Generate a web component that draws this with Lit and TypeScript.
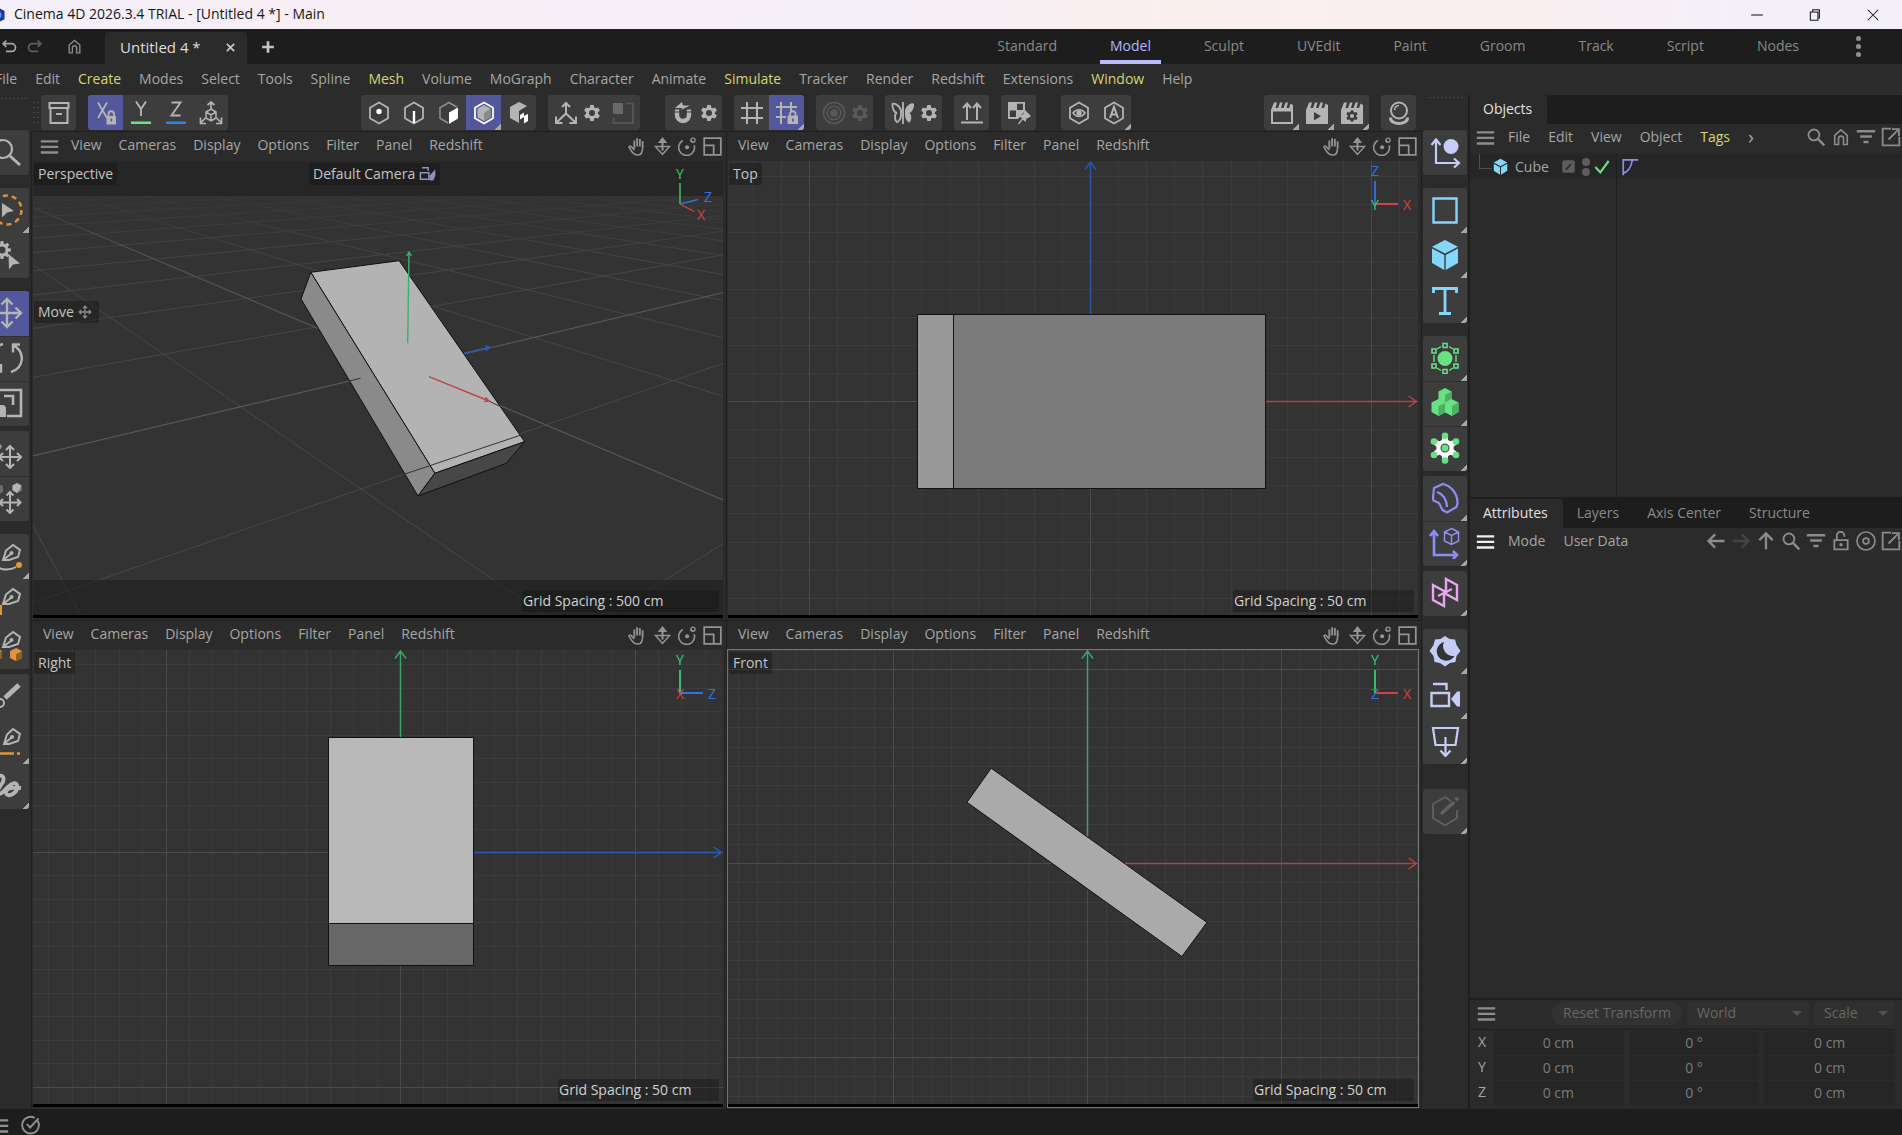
import { LitElement, html, svg, css, nothing, TemplateResult, SVGTemplateResult } from "lit";
import { customElement, property } from "lit/decorators.js";
import { classMap } from "lit/directives/class-map.js";

/* ---------- icons, 24 unit box ---------- */

const gearPath = (cx: number, cy: number, r: number, teeth: number, hole: number): string => {
  const pts: string[] = [];
  const step = (Math.PI * 2) / teeth;
  for (let i = 0; i < teeth; i++) {
    const a = i * step - Math.PI / 2;
    const seg: Array<[number, number]> = [[-0.36, 0.72], [-0.2, 1], [0.2, 1], [0.36, 0.72]];
    for (const [o, k] of seg) {
      pts.push(`${(cx + Math.cos(a + o * step) * r * k).toFixed(2)} ${(cy + Math.sin(a + o * step) * r * k).toFixed(2)}`);
    }
  }
  const h = hole;
  return `M${pts.join("L")}ZM${cx - h} ${cy}a${h} ${h} 0 1 0 ${2 * h} 0a${h} ${h} 0 1 0 ${-2 * h} 0Z`;
};

const HEX = "M12 1.5L21 6.7V17.3L12 22.5L3 17.3V6.7Z";
const FOURWAY = "M12 2V22M2 12H22M8.5 5.5L12 2L15.500 5.5M8.5 18.5L12 22L15.5 18.5M5.5 8.5L2 12L5.5 15.5M18.5 8.5L22 12L18.5 15.5";
const line = (d: string, w = 2, c = "currentColor") =>
  svg`<path d=${d} fill="none" stroke=${c} stroke-width=${w} />`;
const fill = (d: string, c = "currentColor") => svg`<path d=${d} fill=${c} fill-rule="evenodd" />`;

const ICONS: Record<string, SVGTemplateResult> = {
  undo: svg`${line("M3 8H15A5 5 0 0 1 15 19H7M7.500 3.5L3 8L7.5 12.5", 2.4)}`,
  redo: svg`${line("M21 8H9A5 5 0 0 0 9 19H17M16.500 3.5L21 8L16.5 12.5", 2.4)}`,
  home: svg`${line("M4.5 21V10L12 3.500L19.5 10V21H15V14A3 3 0 0 0 9 14V21Z")}`,
  close: svg`${line("M4 4L20 20M20 4L4 20", 4)}`,
  plus: svg`${line("M12 2V22M2 12H22", 4.6)}`,
  menu: svg`${line("M1 5.500H23M1 12.500H23M1 19.500H23", 3)}`,
  search: svg`<circle cx="9.5" cy="9.5" r="6.5" fill="none" stroke="currentColor" stroke-width="2.200" />${line("M14 14L22 22", 2.8)}`,
  filter: svg`${line("M1 5H23M5 11.5H19M9 18H15", 3)}`,
  popout: svg`${line("M12 2H2V22H22V12M9 15L20 4M13 2.500H21.5V11", 2.2)}`,
  back: svg`${line("M22 12H4M11 4L3 12L11 20", 2.8)}`,
  forward: svg`${line("M2 12H20M13 4L21 12L13 20", 2.8)}`,
  up: svg`${line("M12 22V4M4 11L12 3L20 11", 2.8)}`,
  lock: svg`${line("M4 11H20V22H4ZM7 11V6A4.500 4.5 0 0 1 16 5V7", 2.200)}<circle cx="12" cy="16.5" r="2" fill="currentColor" />`,
  target: svg`<circle cx="12" cy="12" r="10.8" fill="none" stroke="currentColor" stroke-width="2" /><circle cx="12" cy="12" r="3.5" fill="none" stroke="currentColor" stroke-width="2" />`,
  checkCircle: svg`${line("M20 7A10 10 0 1 1 16.500 3.5M7 11L11 15L21 4", 2.3)}`,
  hand: svg`${line("M8 14.500V4.500M11.500 12V1.500M15 12V2.500M18.500 13V5.500", 2.3)}${line("M8 16.500L4 12C2.500 10.500 0.500 12 2 14C6 21 8 22.800 13 22.800C17.500 22.800 18.500 19 18.500 12", 2)}`,
  dolly: svg`${fill("M12 0L18 7.500H13.300V11H23L12 23.500L1 11H10.700V7.500H6ZM5 13L12 20.500L19 13H13.300V17H10.700V13Z")}`,
  orbit: svg`${line("M6 4.500A10 10 0 1 0 20.500 10.500", 2)}${line("M15.500 4.500A10 10 0 0 1 19 7", 2)}<circle cx="11.500" cy="13" r="2.600" fill="currentColor" /><circle cx="19" cy="4" r="2.600" fill="none" stroke="currentColor" stroke-width="1.600" />`,
  maximize: svg`${line("M1.500 1.500H22.500V22.500H1.5ZM1.500 10.500H13.500V22.500", 2.2)}`,
  archive: svg`${line("M2.500 2H21.500V7H2.5ZM3.500 7V22H20.500V7M9 13H15", 2)}`,
  axisX: svg`${line("M4 1.500L13 17M13 1.500L4 17", 1.8)}${fill("M12.500 15H22V23.500H12.500Z")}${line("M14.500 15V13A2.700 2.700 0 0 1 20 13V15", 1.8)}<rect x="16.500" y="17.500" width="1.600" height="3" fill="#53579c" />`,
  axisY: svg`${line("M7 0.500L12 8L17 0.500M12 8V15", 1.9)}<rect x="2" y="20.500" width="20" height="2.500" fill="#6be48c" />`,
  axisZ: svg`${line("M7.500 1.500H16.500L7.500 14.500H16.500", 1.9)}<rect x="2" y="20.500" width="20" height="2.500" fill="#2a86e8" />`,
  coords: svg`${line("M12 1V9M8.500 4L12 1L15.500 4M6.500 17L1.500 22M1.500 16.500V22.500H7M17.500 17L22.500 22M22.500 16.500V22.500H17", 1.7)}${line("M12 8L17 11V17L12 20L7 17V11ZM7 11L12 14L17 11M12 14V20", 1.5)}`,
  points: svg`${line(HEX, 1.8)}<circle cx="12" cy="10.500" r="2.700" fill="#fff" />`,
  edges: svg`${line(HEX, 1.8)}${line("M12 10V22", 2.4, "#fff")}`,
  polys: svg`${line("M11 22L3 17.300V6.700L12 1.500L20 6.200", 1.6, "#8d8d8d")}${fill("M12 11.500L21 6.500V17.500L12 23Z", "#fff")}`,
  model: svg`${fill("M12 4L18.500 7.800V16.200L12 20L5.500 16.200V7.800Z")}${fill("M12 12L18.500 7.800V16.200L12 20Z", "#8a8a8a")}${line(HEX, 1.8, "#fff")}`,
  texture: svg`${fill("M12 1L20 5L12 10V22L3 17V6Z")}${fill("M13 14L17 11.500V16L13 18.500ZM17 15L21 12.800V20L17 22.500Z", "#fff")}`,
  axisMode: svg`${line("M12 2V12.500L2.500 21.500M12 12.500L21.500 21.500M8 6L12 2L16 6M2 15.500V22H8.500M22 15.500V22H15.500", 2)}`,
  gear: svg`${fill(gearPath(12, 12, 11, 6, 4))}`,
  solo: svg`${fill("M2 2H12V13H2Z", "#686868")}${line("M15 2.500H22V22H2.500V16.500", 2, "#545454")}`,
  magnet: svg`${line("M6 8.500V14A6 6 0 0 0 18 14V8.500", 4.4)}${line("M3 11H9.500M14.500 11H21", 1.2, "#3d3d3d")}${fill("M11 1L4 7H11.500L10 9L19 4.500H12Z")}`,
  grid: svg`${line("M7 1V23M17 1V23M1 7H23M1 17H23", 2)}`,
  gridLock: svg`${line("M6 1V23M16 1V10M1 6H22M1 16H11", 2)}${fill("M12.500 14.500H23V23H12.500Z")}${line("M15 15V12.500A2.800 2.800 0 0 1 20.500 12.500V15", 1.8)}<rect x="17" y="17.500" width="1.600" height="3" fill="#53579c" />`,
  rings: svg`<circle cx="12" cy="12" r="10.500" fill="none" stroke="currentColor" stroke-width="1.600" /><circle cx="12" cy="12" r="6.800" fill="none" stroke="currentColor" stroke-width="1.600" /><circle cx="12" cy="12" r="3.800" fill="currentColor" />`,
  butterfly: svg`${line("M10 9C8 3 2 2 1.500 3C1 6 3 12 6 12C3 13 3.500 19 6 21C8 21 10 17 10 14Z", 1.8)}${line("M12 1V23", 1.8)}${fill("M14 9C16 3 22 1 23 3C23.500 6 21 12 18 12C21 13 21 19 18.500 21.500C16 21 14 17 14 14Z")}`,
  arrowsUp: svg`${line("M7 3V19M17 3V19M3 7L7 2.500L11 7M13 7L17 2.500L21 7M1 21.500H23", 2)}`,
  pinGrid: svg`${fill("M1 1H18V10L11 18H1ZM10 2.800V9H16V2.800ZM2.800 9.500V16H9V9.500Z")}${fill("M18 9L24 15L22 16.500L19.500 17.500L18.500 21L15.800 18.500L12 23.500L11 22.500L15 17.500L12.500 15L16 13.500Z")}`,
  eyeHex: svg`${line(HEX, 1.8)}${line("M6 12C9 7.500 15 7.500 18 12C15 16.500 9 16.500 6 12Z", 1.5)}<circle cx="12" cy="12" r="2.700" fill="currentColor" />`,
  autoHex: svg`${line(HEX, 1.8)}${line("M8 17L12 6L16 17M9.500 13.500H14.500", 2)}`,
  clap: svg`${line("M2 9.500H22V22H2Z", 2)}${fill("M1 9L4 1.500H7L5.500 7H8L10 1.500H12.500L11 7H13.500L15.500 1.500H18L16.500 7H19L20.500 2.500L23 4V10H1Z")}`,
  clapPlay: svg`${fill("M1 9L4 1.500H7L5.500 7H8L10 1.500H12.500L11 7H13.500L15.500 1.500H18L16.500 7H19L20.500 2.500L23 4V23H1ZM9 11V19.500L16 15.200Z")}`,
  clapGear: svg`${fill("M1 9L4 1.500H7L5.500 7H8L10 1.500H12.500L11 7H13.500L15.500 1.500H18L16.500 7H19L20.500 2.500L23 4V23H1Z")}${fill(gearPath(12, 15, 6, 6, 2), "#3d3d3d")}`,
  ball: svg`<circle cx="12" cy="9.500" r="8" fill="none" stroke="currentColor" stroke-width="2" />${line("M7.500 9A5 5 0 0 1 12 4.500", 1.6)}${line("M3.500 16.500C3 24.500 21 24.500 20.500 16.500", 3)}`,

  /* ---------- palette icons, 32 unit box ---------- */
  pSearch: svg`<circle cx="12" cy="13" r="9" fill="none" stroke="currentColor" stroke-width="2.200" />${line("M19 20L29 29", 3)}`,
  pSelect: svg`<circle cx="16" cy="16" r="14.500" fill="none" stroke="#e0953c" stroke-width="2.400" stroke-dasharray="5 4.100" />${fill("M11 9L23 17L16 18.500L11 23.500Z")}`,
  pTweak: svg`${fill(gearPath(11, 11, 9, 8, 3.500))}${fill("M17.500 15L29 24.500L22 25.500L18 30.500Z")}`,
  pMove: svg`${line("M16 2V30M2 16H30M10.500 7.500L16 2L21.500 7.500M10.500 24.500L16 30L21.500 24.500M7.500 10.500L2 16L7.500 21.500M24.500 10.500L30 16L24.500 21.500", 2.4)}`,
  pRotate: svg`${line("M21 3A14 14 0 0 1 20 30M11 29A14 14 0 0 1 12 2M29 2.500H22V10.500M3 29.500H10V22", 2.4)}`,
  pScale: svg`${line("M3 14V3H30V29H16M13 9H22V18", 2.6)}${fill("M3 18H11Q15 18 15 22V30H3Z")}`,
  pMoveAxis: svg`${line("M19 9V31M8 20H30M15 13L19 9L23 13M15 27L19 31L23 27M12 16L8 20L12 24M26 16L30 20L26 24", 2)}${fill("M1 5H7L11 9L10 12L4 11Z", "#909090")}`,
  pMoveCube: svg`${line("M19 10V31M8.500 20.500H29.500M15.500 13.500L19 10L22.500 13.500M15.500 27.500L19 31L22.500 27.500M12 17L8.500 20.500L12 24M26 17L29.500 20.500L26 24", 2)}${fill("M26 1L30.500 3.500V8.500L26 11L21.500 8.500V3.500Z", "#8a8a8a")}${fill("M26 1L30.500 3.500L26 11L21.500 8V3.500Z")}${fill("M8 2L12 4V10L6 13L2 10V4Z", "#6c6c6c")}`,
  pPenArc: svg`${line("M12 20L15 10.500L22 5L29 10L27 17L18 20ZM12 20L20.500 13.500M22 5L29 10", 2)}<circle cx="20.500" cy="13" r="2" fill="currentColor" />${line("M5 25.500C10 31 20 30 25 27", 2)}<circle cx="28" cy="25" r="3" fill="#e0953c" />`,
  pPenSquare: svg`${line("M12 19L15 9.500L22 4L29 9L27 16L18 19ZM12 19L20.500 12.500", 2)}<circle cx="20.500" cy="12" r="2" fill="currentColor" /><rect x="2" y="20" width="9" height="10" fill="#e0953c" />`,
  pPenCubes: svg`${line("M12 17L15 7.500L22 2L29 7L27 14L18 17ZM12 17L20.500 10.500", 2)}<circle cx="20.500" cy="10" r="2" fill="currentColor" />${fill("M25 18L31 21V28L25 31L19 28V21ZM5 18L11 21V28L5 31L0 28V21ZM5 6L9 8V15L5 17Z", "#e0953c")}${fill("M25 24L31 21V28L25 31ZM5 24L11 21V28L5 31Z", "#935f22")}`,
  pBrush: svg`${line("M14 18L28 5", 5)}<circle cx="9" cy="23" r="4" fill="none" stroke="currentColor" stroke-width="2" />`,
  pPenLine: svg`${line("M13 19L16 9.500L22 4L29 9L27 16L18 19ZM13 19L20.500 12.500", 2)}<circle cx="21" cy="12" r="2" fill="currentColor" />${line("M4 28.500H23M26 28.500H29", 2.4, "#e0953c")}`,
  pSquiggle: svg`${line("M5 8C12 2 15 9 10 15C5 22 6 27 12 22C17 16 24 10 26 15C28 22 17 29 15 23C14 18 22 17 30 18", 3.800)}`,

  rAxis: svg`${line("M7 4V27H30M2.500 9L7 3.500L11.500 9M25 22.500L30 27L25 31.500", 2.2)}<circle cx="22" cy="10.500" r="7.500" fill="currentColor" />`,
  rRect: svg`${line("M4.500 4.500H27.500V28.500H4.500Z", 2.4)}`,
  rCube: svg`${fill("M16 1L29 7.800L16 14.500L3 7.800Z")}${fill("M3 9.500L15.300 16V31L3 24ZM29 9.500L16.700 16V31L29 24Z")}`,
  rText: svg`${line("M4.500 9V4.500H27.500V9M16 4.500V29M10 29.500H22", 2.8)}`,
  rSubdiv: svg`<circle cx="16" cy="16.500" r="7.500" fill="currentColor" />${line("M14 1.500H18V5.500H14ZM14 27.500H18V31.500H14ZM3 7H7V11H3ZM25 7H29V11H25ZM3 22H7V26H3ZM25 22H29V26H25Z", 1.6)}${line("M5 13V20M27 13V20M8 7L12 4.500M20 4.500L24 7M8 26L12 28.500M20 28.500L24 26", 1.4)}`,
  rCloner: svg`${fill("M16 1L22.500 4.500V12L29.500 15.500V25L23 29L16 25.500L9.500 29L2.500 25V15.500L9.500 12V4.500Z")}${fill("M16 8L22.500 4.500V12L16 15.500ZM23 19L29.500 15.500V25L23 29ZM9.500 19L16 16V25.500L9.500 29Z", "#4fae66")}`,
  rDynamics: svg`${fill(gearPath(16, 16, 12, 6, 4.500), "#fff")}<g fill="currentColor"><circle cx="16" cy="16" r="3.500" /><circle cx="16" cy="3.800" r="3.300" /><circle cx="16" cy="28.500" r="3.300" /><circle cx="5" cy="9.500" r="3.300" /><circle cx="27" cy="9.500" r="3.300" /><circle cx="5" cy="23" r="3.300" /><circle cx="27" cy="23" r="3.300" /></g>`,
  rBend: svg`${line("M14 2C22 4 28.500 11 28.500 21L27.500 25L18 30.500L13.500 28L10 21L4.500 18.500L4 16L5 6ZM8 10C14 12 18 18 18 25", 2.2)}`,
  rAxisCube: svg`${line("M5 4V28H28M1 9L5 4L9 9M24 24L28 28L24 32", 2.6)}${line("M22.500 1.500L29.500 5V14L22.500 17.500L15.500 14V5ZM15.500 5L22.500 8.500L29.500 5M22.500 8.500V17.500", 1.5)}`,
  rField: svg`${line("M4 8L15 14V29L4 23ZM17 2L28 8V23L17 17Z", 2.4)}${line("M9 19L23 12", 2)}`,
  rLight: svg`${fill("M16 1L20.500 4L26 4.500L27.500 10L31.500 16L27.500 21L26.500 27L21 28L16 31.500L11 28L5.500 27L4.500 21L0.500 16L4.500 10L6 4.500L11.500 4Z")}${fill("M15 7A9.500 9.500 0 1 0 25.500 21A10 10 0 0 1 15 7Z", "#343434")}`,
  rCamera: svg`${line("M2.500 13H20V26H2.500ZM4 4H17.500V10", 2.4)}${fill("M22 19L28 11.500H31V26.500H28Z")}`,
  rStage: svg`${line("M4 3H29L26.500 20H6.500ZM16.500 12V29.500M11.500 25.500L16.500 31L21.500 25.500", 2.2)}`,
  rEdit: svg`${line("M22 6L16 2L4 9V23L16 30.500L28 23V15", 1.8)}${line("M12 19L25 7", 3.6)}${line("M26.500 5L29 3", 3.6)}`,

  logo: svg`${fill("M12 1L22 6.500V17.500L12 23L2 17.500V6.500Z", "#2230a0")}<circle cx="12" cy="12" r="6" fill="#5d9cf5" />`,
  cube: svg`${fill("M12 1L21.500 6.500L12 11.500L2.500 6.500ZM2.500 8L11.300 13V23.500L2.500 18ZM21.500 8L12.700 13V23.500L21.500 18Z")}`,
  layerBox: svg`<rect x="2" y="2" width="20" height="20" rx="3" fill="#5d5d5d" />${line("M8 17L16 8", 3, "#2b2b2b")}`,
  check: svg`${line("M2 12L9.500 20L22 3", 3.2)}`,
  phong: svg`${line("M3 23V2.500H23M3 20C8 19 14 13 15 3", 2.2)}`,
  camLink: svg`${line("M2 11H14V20H2ZM4 4H13V8", 2.2)}${fill("M15 15L23 6V15L20 22L15 22Z")}`,
  fourway: svg`${line(FOURWAY, 2.2)}`,
  minimize: svg`${line("M2 12H22", 1.8)}`,
  restore: svg`${line("M4 7H17V21H4ZM8 6V3H19.500V17H18", 1.8)}`,
  winClose: svg`${line("M3 3L21 21M21 3L3 21", 1.8)}`,
};

const icon = (name: string, size = 24, box = 24): TemplateResult =>
  html`<svg class="icon" width=${size} height=${size} viewBox="0 0 ${box} ${box}" aria-hidden="true">${ICONS[name]}</svg>`;

const shared = css`
  * { box-sizing: border-box; }
  button, input, select { font: inherit; color: inherit; }
  button { border: 0; padding: 0; margin: 0; background: none; display: flex; align-items: center; justify-content: center; }
  .icon { display: block; flex: none; }
`;

/* ---------- viewport scenes, 690 x 454 ---------- */

interface GridSpec { x: number; y: number; step: number; }

const orthoGrid = ({ x, y, step }: GridSpec): SVGTemplateResult => {
  const minor: string[] = [];
  const major: string[] = [];
  for (let i = -30; i <= 30; i++) {
    const gx = Math.round(x + i * step) + 0.5;
    const gy = Math.round(y + i * step) + 0.5;
    const set = i % 10 === 0 ? major : minor;
    if (gx > 0 && gx < 690) set.push(`M${gx} 0V454`);
    if (gy > 0 && gy < 454) set.push(`M0 ${gy}H690`);
  }
  return svg`<rect width="690" height="454" fill="#333" />
    <path d=${minor.join("")} stroke="#3b3b3b" /><path d=${major.join("")} stroke="#4b4b4b" />`;
};

/** Ground plane seen through the default camera. */
const ground = (): SVGTemplateResult => {
  const at = (i: number, j: number) => {
    const w = 1 - 0.187 * i + 0.15 * j;
    return `${((849 + 90.500 * i + 448 * j) / w / 2.24 - 3).toFixed(1)} ${((650.8 + 19.700 * i - 4 * j) / w / 3 - 11).toFixed(1)}`;
  };
  const minor: string[] = [];
  const major: string[] = [];
  for (let i = -20; i <= 4; i++) {
    const near = Math.max(-5, (0.187 * i - 1 + 0.12) / 0.15);
    (i === 0 ? major : minor).push(`M${at(i, near)}L${at(i, 20)}`);
  }
  for (let j = -5; j <= 20; j++) {
    const near = Math.min(4.600, (1 + 0.15 * j - 0.12) / 0.187);
    (j === 0 ? major : minor).push(`M${at(near, j)}L${at(-20, j)}`);
  }
  return svg`<g mask="url(#fade)" fill="none"><path d=${minor.join("")} stroke="#484848" /><path d=${major.join("")} stroke="#585858" stroke-width="1.200" /></g>`;
};

const RED = "#d44343";
const GREEN = "#35d06f";
const BLUE = "#2f74de";

const letter = (t: string, x: number, y: number, c: string) =>
  svg`<text x=${x} y=${y + 5} fill=${c} text-anchor="middle" font-size="14">${t}</text>`;

const gizmo = (up: string, right: string, origin: string): SVGTemplateResult => {
  const col: Record<string, string> = { X: RED, Y: GREEN, Z: BLUE };
  return svg`<path d="M647 20V43" stroke=${col[up]} stroke-width="1.800" /><path d="M647 43H670" stroke=${col[right]} stroke-width="2" />
    ${letter(up, 647, 10, col[up])}${letter(right, 679, 44, col[right])}${letter(origin, 647, 44, col[origin])}`;
};

const SCENES: Record<string, () => SVGTemplateResult> = {
  Perspective: () => svg`
    <defs><linearGradient id="fg" x1="0" y1="0" x2="0" y2="1"><stop offset="0.060" stop-color="#222" /><stop offset="0.220" stop-color="#ddd" /><stop offset="0.500" stop-color="#fff" /></linearGradient>
    <mask id="fade" maskUnits="userSpaceOnUse" x="0" y="0" width="690" height="454"><rect width="690" height="454" fill="url(#fg)" /></mask></defs>
    <rect width="690" height="454" fill="#333" />
    ${ground()}
    <rect width="690" height="35" fill="#262626" /><rect y="419" width="690" height="35" fill="#1c1c1c" opacity="0.550" />
    <g stroke="#111" stroke-linejoin="round">
      <path d="M277.800 111.300L366.200 99.700L491.600 280.700L401.900 312.300Z" fill="#b3b3b3" />
      <path d="M277.800 111.300L268 138L385 335L401.900 312.300Z" fill="#8a8a8a" />
      <path d="M401.900 312.300L491.600 280.700L473.300 302.300L385 335Z" fill="#474747" />
    </g>
    <path d="M372 313L488 274M316 220L327.500 217.300M456 240L466 245" stroke="#333" fill="none" />
    <g fill="none" stroke-width="1.400">
      <path d="M374.700 182.300L376 92M373.500 95L376 91L378.500 95" stroke="#3db06c" />
      <path d="M396 215.700L456 240M451 240.500L456 240L452.500 236.500" stroke="#bf4444" />
      <path d="M431 192.300L457 186.300M452 185L457 186.300L453 189.500" stroke="#2b5cb4" />
      <path d="M647 22V43" stroke=${GREEN} /><path d="M647 43L665 38.500" stroke=${BLUE} /><path d="M647 43L661 50.500" stroke=${RED} />
    </g>
    ${letter("Y", 647, 13, GREEN)}${letter("Z", 675, 36, BLUE)}${letter("X", 668, 54, RED)}`,
  Top: () => svg`${orthoGrid({ x: 362, y: 240, step: 28.1 })}
    <path d="M189.500 153.500H225.500V327.500H189.500Z" fill="#999" stroke="#111" />
    <path d="M225.500 153.500H537.500V327.500H225.500Z" fill="#7b7b7b" stroke="#111" />
    <path d="M362.500 153V1M357 8.500L362.500 1L368 8.500" fill="none" stroke="#2855a8" stroke-width="1.500" />
    <path d="M538 240.500H688M680.500 235L688.500 240.500L680.500 246" fill="none" stroke="#b34242" stroke-width="1.500" />
    ${gizmo("Z", "X", "Y")}`,
  Right: () => svg`${orthoGrid({ x: 367, y: 202, step: 23.45 })}
    <path d="M295.500 87.500H440.500V273.500H295.500Z" fill="#b9b9b9" stroke="#111" />
    <path d="M295.500 273.500H440.500V315.500H295.500Z" fill="#676767" stroke="#111" />
    <path d="M367.500 87V1M362 8.500L367.500 1L373 8.500" fill="none" stroke="#3aa566" stroke-width="1.500" />
    <path d="M441 202.500H688M680.500 197L688.500 202.500L680.500 208" fill="none" stroke="#2b5cb4" stroke-width="1.500" />
    ${gizmo("Y", "Z", "X")}`,
  Front: () => svg`${orthoGrid({ x: 359, y: 213, step: 19.4 })}
    <path d="M263.200 118.200L479 272.400L453.900 306.500L239 152.300Z" fill="#aaa" stroke="#111" />
    <path d="M359.500 186V1M354 8.500L359.500 1L365 8.500" fill="none" stroke="#3aa566" stroke-width="1.500" />
    <path d="M397 213.500H688M680.500 208L688.500 213.500L680.500 219" fill="none" stroke="#b34242" stroke-width="1.500" />
    ${gizmo("Y", "X", "Z")}`,
};

@customElement("viewport-pane")
export class ViewportPane extends LitElement {
  @property() name = "Top";
  @property() spacing = "50 cm";
  @property({ type: Boolean }) burger = false;
  @property({ type: Boolean }) active = false;
  /** Width of the grid spacing read-out: "s", "m" or "l". */
  @property() readout = "m";

  static styles = [shared, css`
    :host {
      display: flex; flex-direction: column; min-width: 0; min-height: 0;
      border-left: 1px solid #1f1f1f; border-top: 1px solid #1f1f1f;
      padding: 0 3px 2px 1px; background: #2b2b2b; color: #a6a6a6;
    }
    .bar { display: flex; align-items: center; height: 29px; flex: none; padding: 0 1px 0 10px; }
    .bar.with-burger { padding-left: 7px; }
    .burger { margin-right: 12px; color: #8c8c8c; }
    .menu { gap: 17px; display: flex; flex: 1; line-height: 20px; padding-bottom: 4px; }
    .tools { display: flex; gap: 6px; color: #949494; }
    .frame { flex: 1; min-height: 0; position: relative; border-bottom: 3px solid #000; background: #333; }
    .frame.active { box-shadow: 0 0 0 1px #777; }
    .scene { display: block; width: 100%; height: 100%; position: absolute; inset: 0; }
    .tag {
      position: absolute; display: flex; align-items: center; gap: 4px; height: 22px; padding: 0 4px 1px;
      background: rgba(20, 20, 20, 0.4); border-radius: 2px; color: #c4c4c4; white-space: nowrap;
    }
    .name { left: 1px; top: 2px; }
    .camera { left: 40%; top: 2px; }
    .camera .icon { color: #8c93b8; }
    .tool { left: 1px; top: 140px; padding-right: 7px; }
    .tool .icon { color: #8c8c8c; }
    .spacing { right: 4px; bottom: 3px; color: #d2d2d2; padding-left: 1px; }
    .spacing.s { width: 161px; }
    .spacing.m { width: 181px; }
    .spacing.l { width: 197px; }
  `];

  render() {
    const persp = this.name === "Perspective";
    return html`
      <div class=${classMap({ bar: true, "with-burger": this.burger })}>
        ${this.burger ? html`<button class="burger" aria-label="Menu">${icon("menu", 19)}</button>` : nothing}
        <div class="menu">
          ${["View", "Cameras", "Display", "Options", "Filter", "Panel", "Redshift"].map((m) => html`<button>${m}</button>`)}
        </div>
        <div class="tools">
          ${["hand", "dolly", "orbit", "maximize"].map((m) => html`<button aria-label=${m}>${icon(m, 19)}</button>`)}
        </div>
      </div>
      <div class=${classMap({ frame: true, active: this.active })}>
        <svg class="scene" viewBox="0 0 690 454" preserveAspectRatio="xMidYMid slice">${SCENES[this.name]()}</svg>
        <span class="tag name">${this.name}</span>
        ${persp ? html`<span class="tag camera">Default Camera${icon("camLink", 17)}</span>
          <span class="tag tool">Move ${icon("fourway", 14)}</span>` : nothing}
        <span class="tag spacing ${this.readout}">Grid Spacing : ${this.spacing}</span>
      </div>`;
  }
}

/* ---------- application shell ---------- */

interface Tool { i: string; on?: boolean; more?: boolean; off?: boolean; slim?: boolean; }
type ToolGroup = { wide?: boolean; tools: Tool[] } | "stretch";

const TOOLBAR: ToolGroup[] = [
  { tools: [{ i: "archive" }] },
  { tools: [{ i: "axisX", on: true }, { i: "axisY" }, { i: "axisZ" }, { i: "coords" }] },
  "stretch",
  { tools: [{ i: "points" }, { i: "edges" }, { i: "polys" }, { i: "model", on: true, more: true }, { i: "texture" }] },
  { tools: [{ i: "axisMode" }, { i: "gear", slim: true }, { i: "solo", off: true }] },
  { wide: true, tools: [{ i: "magnet" }, { i: "gear", slim: true }] },
  { tools: [{ i: "grid" }, { i: "gridLock", on: true, more: true }] },
  { tools: [{ i: "rings", off: true }, { i: "gear", slim: true, off: true }] },
  { tools: [{ i: "butterfly" }, { i: "gear", slim: true }] },
  { tools: [{ i: "arrowsUp" }] },
  { tools: [{ i: "pinGrid" }] },
  { wide: true, tools: [{ i: "eyeHex" }, { i: "autoHex", more: true }] },
  "stretch",
  { tools: [{ i: "clap", more: true }, { i: "clapPlay", more: true }, { i: "clapGear", more: true }] },
  { tools: [{ i: "ball" }] },
];

interface Pal { gap?: "s" | "m" | "l"; tone?: string; tools: Tool[]; lined?: boolean; }

const LEFT: Pal[] = [
  { tools: [{ i: "pSearch" }] },
  { gap: "m", tools: [{ i: "pSelect", more: true }, { i: "pTweak" }] },
  { gap: "m", lined: true, tools: [{ i: "pMove", on: true }, { i: "pRotate" }, { i: "pScale" }] },
  { gap: "s", lined: true, tools: [{ i: "pMoveAxis" }, { i: "pMoveCube" }] },
  { gap: "m", tools: [{ i: "pPenArc", more: true }, { i: "pPenSquare" }, { i: "pPenCubes" }] },
  { gap: "s", tools: [{ i: "pBrush" }, { i: "pPenLine", more: true }, { i: "pSquiggle", more: true }] },
];

const RIGHT: Pal[] = [
  { tone: "ice", tools: [{ i: "rAxis" }] },
  { gap: "m", tone: "sky", tools: [{ i: "rRect", more: true }, { i: "rCube", more: true }, { i: "rText", more: true }] },
  { gap: "m", tone: "green", lined: true, tools: [{ i: "rSubdiv", more: true }, { i: "rCloner", more: true }, { i: "rDynamics", more: true }] },
  { gap: "s", tone: "violet", lined: true, tools: [{ i: "rBend", more: true }, { i: "rAxisCube", more: true }] },
  { gap: "s", tone: "pink", tools: [{ i: "rField", more: true }] },
  { gap: "m", tone: "ice", tools: [{ i: "rLight", more: true }, { i: "rCamera", more: true }, { i: "rStage", more: true }] },
  { gap: "l", tone: "dim", tools: [{ i: "rEdit", more: true }] },
];

const MENU = ["File", "Edit", "Create", "Modes", "Select", "Tools", "Spline", "Mesh", "Volume", "MoGraph", "Character",
  "Animate", "Simulate", "Tracker", "Render", "Redshift", "Extensions", "Window", "Help"];
const MARKED = new Set(["Create", "Mesh", "Simulate", "Window", "Tags"]);
const LAYOUTS = ["Standard", "Model", "Sculpt", "UVEdit", "Paint", "Groom", "Track", "Script", "Nodes"];

@customElement("app-root")
export class AppRoot extends LitElement {
  @property() layout = "Model";

  static styles = [shared, css`
    :host {
      display: flex; flex-direction: column; height: 100vh; overflow: hidden;
      background: #2b2b2b; color: #a6a6a6;
      font: 14px/20px "Open Sans", "Noto Sans", sans-serif;
    }
    .title {
      display: flex; align-items: center; height: 29px; flex: none; color: #161616;
      background: linear-gradient(90deg, #f4f0f9, #f8eef5 18%, #f5eff9 45%, #fbefee 62%, #faeff0 80%, #f4f0fa 92%);
    }
    .title .logo { margin: 0 8px 0 -12px; }
    .title .text { flex: 1; padding-bottom: 1px; }
    .win { display: flex; }
    .win button { width: 58px; height: 29px; }

    .docs { display: flex; align-items: stretch; height: 35px; flex: none; background: #1d1d1d; }
    .quick { display: flex; align-items: center; gap: 8px; padding-left: 1px; color: #a6a6a6; }
    .quick .dim { color: #5e5e5e; }
    .quick .home { margin-left: 15px; color: #8a8a8a; }
    .doc {
      display: flex; align-items: center; width: 142px; margin: 3px 0 0 22px; padding: 0 11px 2px 15px;
      background: #2b2b2b; border-radius: 4px 4px 0 0; color: #dedede; justify-content: space-between; font-size: 15px;
    }
    .doc button, .add { color: #c4c4c4; }
    .add { margin-left: 14px; }
    .layouts { display: flex; flex: 1; justify-content: flex-end; gap: 33px; color: #8a8a8a; }
    .layouts button { padding: 0 10px; border: 0 solid transparent; border-width: 3px 0 4px; }
    .layouts .current { color: #b3b7ff; border-bottom-color: #b9bdfb; }
    .more { flex-direction: column; gap: 3px; margin: 0 41px 0 47px; }
    .more i { width: 5px; height: 5px; border-radius: 50%; background: #8f8f8f; }

    .menu { display: flex; align-items: center; gap: 18px; height: 31px; flex: none; }
    .main-menu { margin-left: -5px; padding-bottom: 2px; }
    .marked { color: #d6d675; }

    .body { display: flex; flex: 1; min-height: 0; }
    .left { display: flex; flex-direction: column; flex: 1; min-width: 0; }
    .toolbar { display: flex; height: 35px; flex: none; gap: 12px; padding-right: 4px; }
    .corner { width: 28px; align-self: flex-start; margin: 1px 0 0; }
    .dots {
      background: radial-gradient(circle, #474747 1px, transparent 1px) 0 0 / 4px 5px;
    }
    .dots.h { height: 7px; }
    .dots.v { width: 7px; margin: 5px 0 4px; }
    .lead { display: flex; gap: 4px; margin-right: -10px; }
    .tail { width: 36px; margin: 0; }
    .group { display: flex; background: #3d3d3d; border-radius: 3px; overflow: hidden; flex: none; }
    .wide { margin-left: 13px; }
    .stretch { flex: 1; min-width: 0; }
    .tool { width: 35px; height: 35px; color: #b4b4b4; }
    .slim { width: 22px; padding-right: 5px; }
    .off { color: #595959; }
    .on { background-color: #53579c; }
    .has-more { background-image: linear-gradient(135deg, transparent 52%, #a8a8a8 52%); background-size: 7px 6px; background-position: right bottom; background-repeat: no-repeat; }

    .work { display: flex; flex: 1; min-height: 0; }
    .palette { display: flex; flex-direction: column; flex: none; overflow: hidden; }
    .palette .group { flex-direction: column; width: 44px; }
    .palette .tool { width: 44px; height: 45px; padding-bottom: 2px; }
    .palette .lined .tool + .tool { border-top: 1px solid #2f2f2f; }
    .pal-left { width: 31px; }
    .pal-left .group { margin-left: -15px; }
    .pal-right { width: 47px; padding-left: 1px; border-left: 1px solid #1f1f1f; }
    .gap-s { margin-top: 5px; }
    .gap-m { margin-top: 13px; }
    .gap-l { margin-top: 25px; }
    .ice .tool { color: #c3cdf6; }
    .sky .tool { color: #82d7fb; }
    .green .tool { color: #67e283; }
    .violet .tool { color: #8f8df5; }
    .pink .tool { color: #eaa5f0; }
    .dim .tool { color: #606060; }
    .views { display: grid; grid-template-columns: 1fr 1fr; grid-template-rows: 1fr 1fr; flex: 1; min-width: 0; margin-top: 1px; }

    .side { width: 434px; flex: none; display: flex; flex-direction: column; border-left: 2px solid #1f1f1f; }
    .tabs { display: flex; background: #1d1d1d; height: 29px; flex: none; color: #8a8a8a; border-radius: 3px 0 0 0; }
    .tabs button { padding: 0 14px 2px; }
    .tabs .sel { background: #2b2b2b; color: #e2e2e2; border-radius: 3px 3px 0 0; padding: 0 15px 2px 13px; }
    .strip { display: flex; align-items: center; height: 30px; flex: none; padding: 0 1px 4px 6px; }
    .strip .menu { flex: 1; height: 26px; margin-left: 13px; }
    .strip .burger { color: #8c8c8c; }
    .strip .burger.lit { color: #f0f0f0; }
    .strip .icons { display: flex; gap: 5px; color: #8c8c8c; }
    .strip .icons .faint { color: #444; }
    .chev { font-size: 20px; }
    .objects { flex: 1; min-height: 0; display: flex; flex-direction: column; }
    .tree { display: grid; grid-template-columns: 147px 1fr; grid-template-rows: 25px 1fr; flex: 1; }
    .cell { background: #262626; display: flex; align-items: center; }
    .tree > :nth-child(odd) { border-right: 1px solid #1f1f1f; }
    .branch { width: 13px; height: 15px; margin: -10px 0 0 9px; border: 1px solid #4e4e4e; border-width: 0 0 1px 1px; }
    .cell .cube { color: #82d7fb; margin-right: 6px; }
    .cell .label { flex: 1; }
    .pair { display: flex; flex-direction: column; gap: 2px; margin: 0 4px 0 6px; }
    .pair i { width: 8px; height: 8px; border-radius: 50%; background: #5d5d5d; }
    .cell .check { color: #67e283; margin-right: 6px; }
    .cell .phong { color: #8f8df5; margin-left: 4px; }
    .attributes { flex: none; height: 501px; border-top: 2px solid #1f1f1f; box-shadow: inset 0 1px 0 #333; }
    .coords { flex: none; border-top: 2px solid #1f1f1f; padding: 2px 7px 4px 0; }
    .coord-bar { display: grid; grid-template-columns: 70px 130px 1fr 81px; column-gap: 5px; align-items: center; padding: 0 0 4px 7px; border-bottom: 1px solid #1f1f1f; color: #676767; }
    .coord-bar .burger { color: #8c8c8c; justify-content: flex-start; }
    .reset { height: 23px; border-radius: 12px; background: #323232; padding-bottom: 2px; }
    .pick { display: grid; align-items: center; }
    .pick > * { grid-area: 1 / 1; }
    .pick select {
      appearance: none; width: 100%; height: 23px; border: 0; border-radius: 3px; padding: 0 10px 2px;
      color: #676767; opacity: 1; background: #303030;
    }
    .pick::after { content: ""; grid-area: 1 / 1; justify-self: end; margin-right: 7px; border: 5px solid transparent; border-width: 5px 5px 0; border-top-color: #505050; pointer-events: none; }
    .row { display: grid; grid-template-columns: 10px 1fr 1fr 1fr; column-gap: 5px; align-items: center; padding: 1px 0 0 8px; }
    .row label { padding-bottom: 2px; }
    .row input { width: 100%; height: 24px; border: 0; border-radius: 3px; background: #262626; text-align: center; color: #7c7c7c; padding: 0 0 2px; }

    .status { display: flex; align-items: center; gap: 12px; height: 26px; flex: none; background: #1d1d1d; color: #8f8f8f; padding-top: 6px; margin-left: -10px; }
  `];

  private button(t: Tool, big: boolean) {
    return html`<button aria-label=${t.i} class=${classMap({ tool: true, on: !!t.on, off: !!t.off, slim: !!t.slim, "has-more": !!t.more })}>
      ${big ? icon(t.i, 32, 32) : icon(t.i, t.slim ? 18 : 24)}</button>`;
  }

  private palette(side: string, groups: Pal[]) {
    return html`<div class="palette pal-${side}">
      ${groups.map((g) => html`<div class="group ${g.gap ? `gap-${g.gap}` : ""} ${g.tone ?? ""} ${g.lined ? "lined" : ""}">
        ${g.tools.map((t) => this.button(t, true))}</div>`)}
    </div>`;
  }

  private items(names: string[]) {
    return names.map((m) => html`<button class=${classMap({ marked: MARKED.has(m) })}>${m}</button>`);
  }

  render() {
    return html`
      <header class="title">
        <span class="logo">${icon("logo", 18)}</span>
        <span class="text">Cinema 4D 2026.3.4 TRIAL - [Untitled 4 *] - Main</span>
        <div class="win">
          <button aria-label="Minimize">${icon("minimize", 14)}</button>
          <button aria-label="Restore">${icon("restore", 14)}</button>
          <button aria-label="Close">${icon("winClose", 14)}</button>
        </div>
      </header>

      <div class="docs">
        <div class="quick">
          <button aria-label="Undo">${icon("undo", 17)}</button>
          <button class="dim" aria-label="Redo">${icon("redo", 17)}</button>
          <button class="home" aria-label="Home">${icon("home", 17)}</button>
        </div>
        <div class="doc"><span>Untitled 4 *</span><button aria-label="Close tab">${icon("close", 11)}</button></div>
        <button class="add" aria-label="New tab">${icon("plus", 14)}</button>
        <nav class="layouts">
          ${LAYOUTS.map((l) => html`<button class=${classMap({ current: l === this.layout })} @click=${() => { this.layout = l; }}>${l}</button>`)}
        </nav>
        <button class="more" aria-label="More layouts"><i></i><i></i><i></i></button>
      </div>

      <nav class="menu main-menu">${this.items(MENU)}</nav>

      <div class="body">
        <div class="left">
          <div class="toolbar">
            <div class="lead"><div class="dots h corner"></div><div class="dots v"></div></div>
            ${TOOLBAR.map((g) => g === "stretch"
              ? html`<div class="stretch"></div>`
              : html`<div class=${classMap({ group: true, wide: !!g.wide })}>${g.tools.map((t) => this.button(t, false))}</div>`)}
            <div class="dots h tail"></div>
          </div>
          <div class="work">
            ${this.palette("left", LEFT)}
            <div class="views">
              <viewport-pane name="Perspective" spacing="500 cm" readout="l" burger></viewport-pane>
              <viewport-pane name="Top"></viewport-pane>
              <viewport-pane name="Right" readout="s"></viewport-pane>
              <viewport-pane name="Front" readout="s" active></viewport-pane>
            </div>
            ${this.palette("right", RIGHT)}
          </div>
        </div>

        <aside class="side">
          <section class="objects">
            <div class="tabs"><button class="sel">Objects</button></div>
            <div class="strip">
              <button class="burger" aria-label="Menu">${icon("menu", 19)}</button>
              <div class="menu">${this.items(["File", "Edit", "View", "Object", "Tags"])}<button class="chev" aria-label="More">›</button></div>
              <div class="icons">${["search", "home", "filter", "popout"].map((n) => html`<button aria-label=${n}>${icon(n, 20)}</button>`)}</div>
            </div>
            <div class="tree">
              <div class="cell">
                <span class="branch"></span><span class="cube">${icon("cube", 17)}</span><span class="label">Cube</span>
                ${icon("layerBox", 15)}<span class="pair"><i></i><i></i></span><span class="check">${icon("check", 16)}</span>
              </div>
              <div class="cell"><span class="phong">${icon("phong", 18)}</span></div>
              <div></div>
              <div class="rest"></div>
            </div>
          </section>
          <section class="attributes">
            <div class="tabs"><button class="sel">Attributes</button><button>Layers</button><button>Axis Center</button><button>Structure</button></div>
            <div class="strip">
              <button class="burger lit" aria-label="Menu">${icon("menu", 19)}</button>
              <div class="menu">${this.items(["Mode", "User Data"])}</div>
              <div class="icons">
                ${["back", "forward", "up", "search", "filter", "lock", "target", "popout"].map((n) =>
                  html`<button class=${classMap({ faint: n === "forward" })} aria-label=${n}>${icon(n, 20)}</button>`)}
              </div>
            </div>
          </section>
          <section class="coords">
            <div class="coord-bar">
              <button class="burger" aria-label="Menu">${icon("menu", 19)}</button>
              <button class="reset">Reset Transform</button>
              <div class="pick"><select aria-label="Space" disabled><option>World</option></select></div>
              <div class="pick"><select aria-label="Size mode" disabled><option>Scale</option></select></div>
            </div>
            ${["X", "Y", "Z"].map((a) => html`<div class="row">
              <label for="pos-${a}">${a}</label>
              <input id="pos-${a}" value="0 cm" /><input aria-label="${a} rotation" value="0 °" /><input aria-label="${a} scale" value="0 cm" />
            </div>`)}
          </section>
        </aside>
      </div>

      <footer class="status">${icon("menu", 19)}${icon("checkCircle", 20)}</footer>`;
  }
}
